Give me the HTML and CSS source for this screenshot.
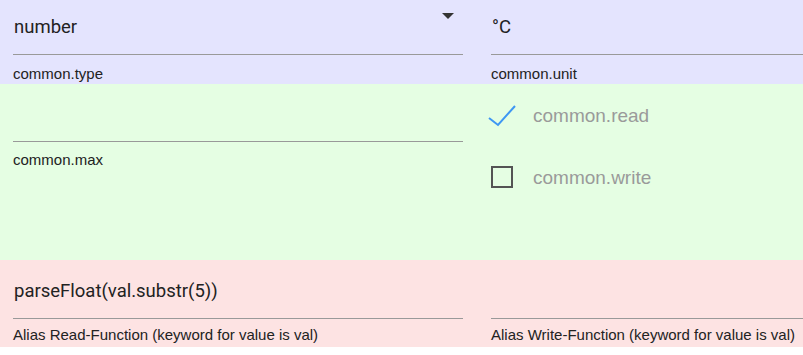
FILE: index.html
```html
<!DOCTYPE html>
<html lang="en">
<head>
  <meta charset="UTF-8">
  <title>State settings</title>
  <link rel="stylesheet" href="styles.css">
</head>
<body>

  <div class="band band-type">
    <div class="field">
      <div class="input select">number
        <span class="caret"></span>
      </div>
      <div class="label">common.type</div>
    </div>
    <div class="field">
      <div class="input">°C</div>
      <div class="label">common.unit</div>
    </div>
  </div>

  <div class="band band-limits">
    <div class="field">
      <div class="input empty"></div>
      <div class="label label-max">common.max</div>
    </div>
    <div class="checks">
      <div class="check-row">
        <div class="check-icon">
          <svg class="tick" width="28" height="24" viewBox="0 0 28 24">
            <polyline points="1,14 10,21 27,2" fill="none" stroke="#3e97f3" stroke-width="2"/>
          </svg>
        </div>
        <span class="check-text">common.read</span>
      </div>
      <div class="check-row">
        <div class="check-icon">
          <svg width="24" height="24" viewBox="0 0 24 24">
            <rect x="1" y="1" width="20" height="20" fill="none" stroke="#545454" stroke-width="2"/>
          </svg>
        </div>
        <span class="check-text">common.write</span>
      </div>
    </div>
  </div>

  <div class="band band-alias">
    <div class="field">
      <div class="input">parseFloat(val.substr(5))</div>
      <div class="label label-alias">Alias Read-Function (keyword for value is val)</div>
    </div>
    <div class="field">
      <div class="input">&nbsp;</div>
      <div class="label label-alias">Alias Write-Function (keyword for value is val)</div>
    </div>
  </div>

</body>
</html>
```

FILE: styles.css
```css
body {
  margin: 0;
  background: #fff;
  overflow: hidden;
  color: #222;
}
.band {
  display: grid;
  grid-template-columns: 450px 450px;
  column-gap: 28px;
  padding-left: 13px;
  overflow: hidden;
}
.band-type {
  height: 84px;
  background: #e4e4fe;
}
.band-limits {
  height: 176px;
  background: #e5fee3;
}
.band-alias {
  height: 87px;
  background: #fde3e3;
}
.input {
  position: relative;
  font-family: Roboto, "Noto Sans", sans-serif;
  font-size: 18.5px;
  line-height: 22px;
  padding: 16px 0 16px 1px;
  border-bottom: 1px solid #999;
  white-space: nowrap;
}
.band-limits .input {
  height: 22px;
  padding: 19px 0 16px;
}
.band-alias .input {
  padding-top: 20px;
}
.caret {
  position: absolute;
  right: 9px;
  top: 13px;
  width: 0;
  height: 0;
  border-left: 6px solid transparent;
  border-right: 6px solid transparent;
  border-top: 6px solid #333;
}
.label {
  font-family: "Liberation Sans", Arial, sans-serif;
  font-size: 15px;
  line-height: 17px;
  margin-top: 10px;
  white-space: nowrap;
}
.label-max {
  margin-top: 9px;
}
.label-alias {
  margin-top: 7px;
}
.checks {
  padding-top: 1px;
}
.check-row {
  display: flex;
  align-items: center;
  height: 62px;
}
.check-icon {
  width: 42px;
  flex: none;
  display: flex;
  align-items: center;
}
.tick {
  margin-left: -3px;
}
.check-text {
  font-family: "Liberation Sans", Arial, sans-serif;
  font-size: 19px;
  line-height: 22px;
  color: #9a9a9a;
}
```
